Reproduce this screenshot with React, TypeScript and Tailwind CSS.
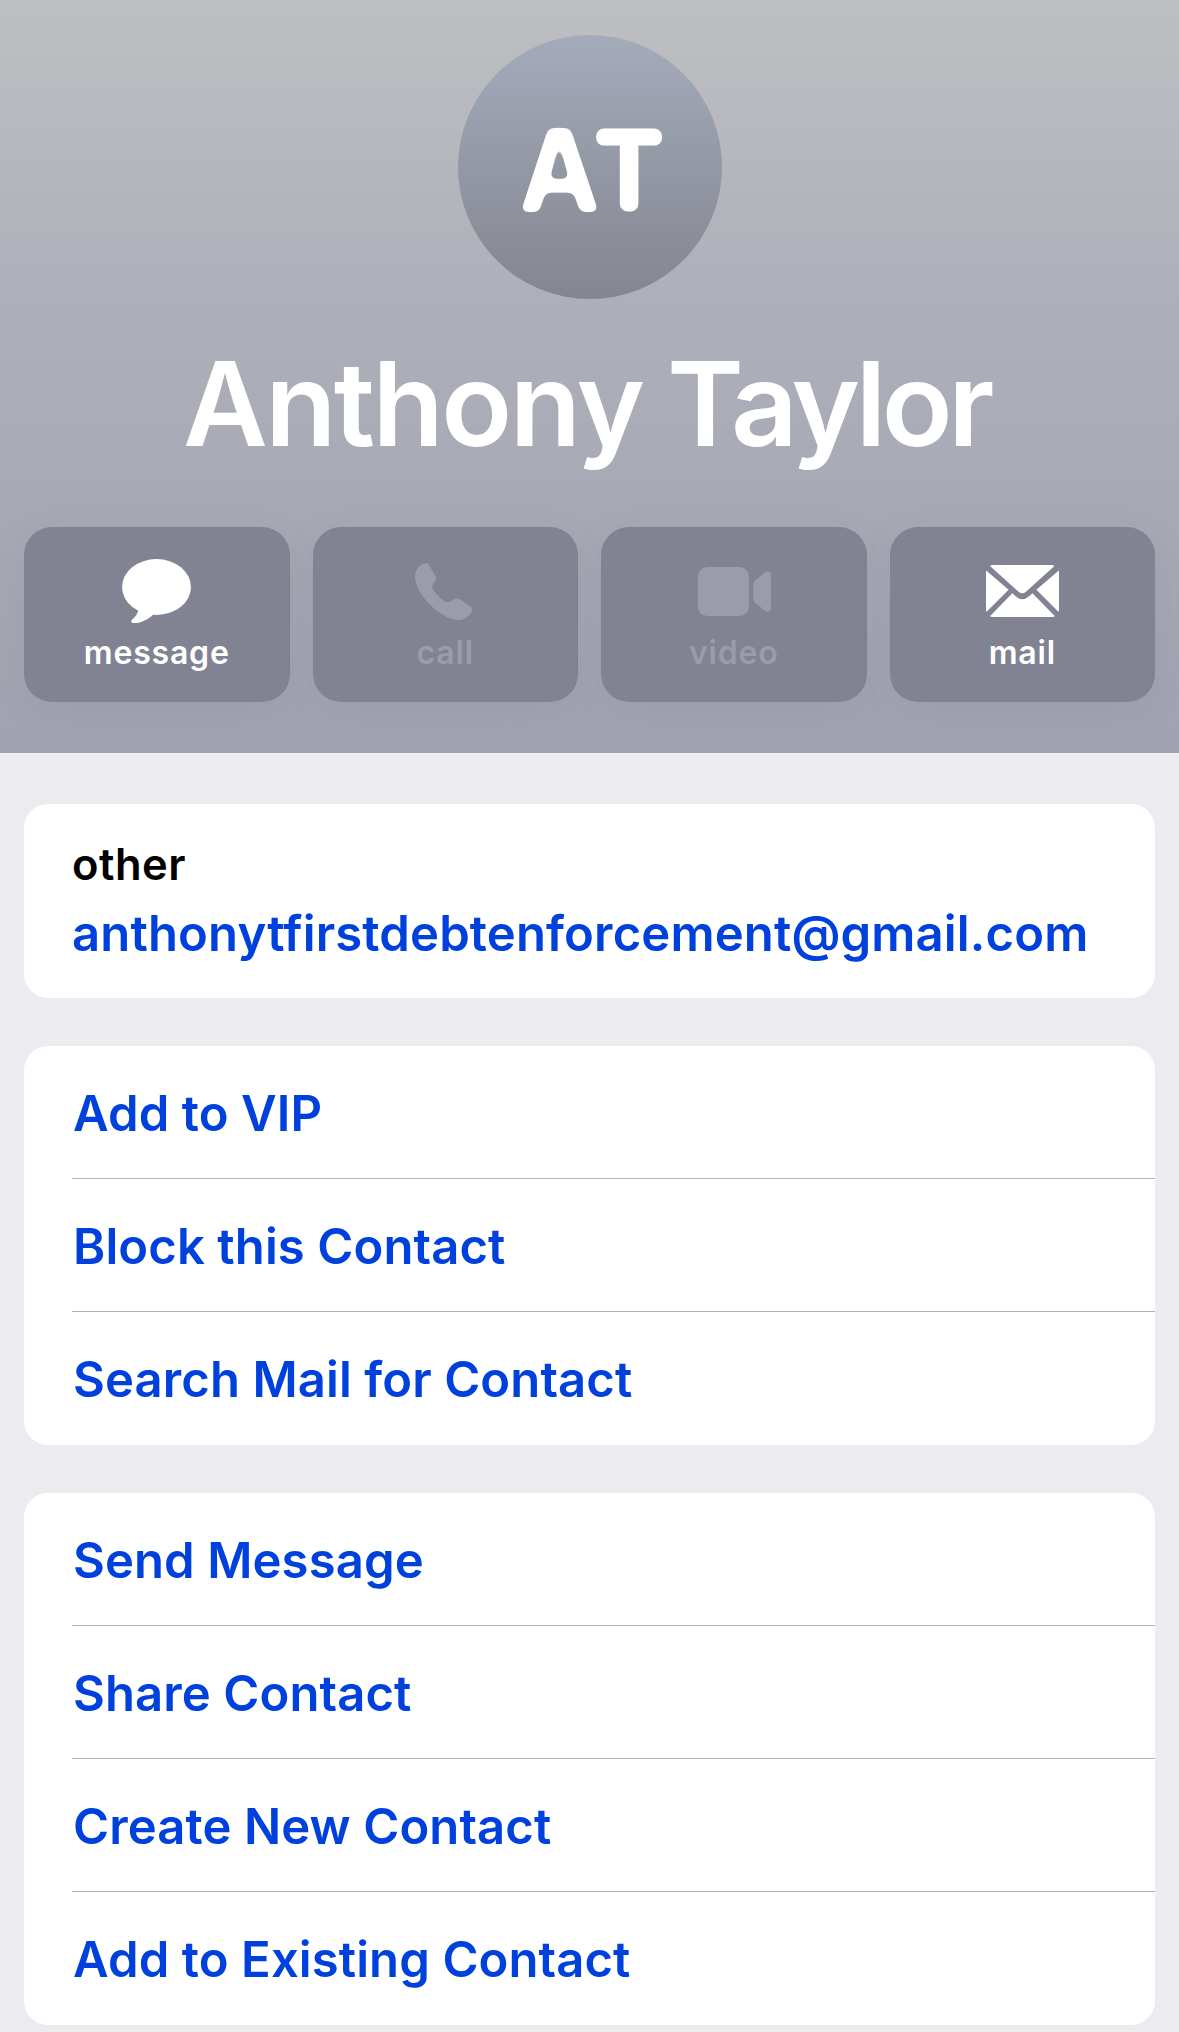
import type { ReactNode } from "react";

function MessageIcon() {
  return (
    <svg width="69" height="64.3" viewBox="0 0 207 193" fill="currentColor">
      <ellipse cx="103.5" cy="84" rx="103.5" ry="84" />
      <path d="M49 152C48 164 39 174 30 182C25 187 28 193 36 193C56 192 79 181 93 167L100 150Z" />
    </svg>
  );
}

function PhoneIcon() {
  return (
    <svg width="57" height="57" viewBox="0 0 171 171" fill="currentColor" className="mr-[3px]">
      <path d="M34 0C26 0 0 12 0 42C0 92 78 171 130 171C156 171 171 148 171 140C171 136 169 133 165 130L138 111C130 105 124 106 119 108L103 117C98 119 93 118 88 114C76 106 62 92 53 77C51 73 51 71 53 67L62 50C64 45 63 41 60 37L42 7C40 3 38 0 34 0Z" />
    </svg>
  );
}

function VideoIcon() {
  return (
    <svg width="73.3" height="49" viewBox="0 0 220 147" fill="currentColor" className="ml-[2px]">
      <rect width="153" height="147" rx="28" />
      <path d="M166 52C166 47 167 44 171 41L199 18C202 15 205 14 209 14C215 14 220 18 220 25V123C220 130 215 134 209 134C205 134 202 133 199 130L171 107C167 104 166 101 166 96Z" />
    </svg>
  );
}

function MailIcon() {
  return (
    <svg width="73" height="52" viewBox="0 0 73 52" fill="currentColor">
      <path d="M4 .9Q5 0 7 0H65.5Q67.5 0 68.4 .9L40 26.8Q36.3 29.9 32.6 26.8Z" />
      <path d="M.2 5.4L22.6 24.7L.6 46.8Q0 46 0 44.5V7Q0 6 .2 5.4Z" />
      <path d="M72.8 5.4L50.4 24.7L72.4 46.8Q73 46 73 44.5V7Q73 6 72.8 5.4Z" />
      <path d="M4 51.3L26.3 28.3L30 31.5Q36.4 37 42.8 31.5L46.4 28.3L69 51.3Q68 52 66 52H7Q5 52 4 51.3Z" />
    </svg>
  );
}

function Monogram() {
  return (
    <svg
      width="264"
      height="264"
      viewBox="0 0 264 264"
      fill="#fff"
      className="font-['Inter',sans-serif]"
      role="img"
      aria-label="AT"
    >
      <defs>
        <filter id="soften" x="-20%" y="-20%" width="140%" height="140%">
          <feGaussianBlur stdDeviation="3.8" />
          <feComponentTransfer>
            <feFuncA type="linear" slope="9" intercept="-3.9" />
          </feComponentTransfer>
        </filter>
      </defs>
      <text
        transform="translate(101.6 176.5) scale(0.96 1)"
        fontSize="115.5"
        fontWeight="700"
        textAnchor="middle"
        filter="url(#soften)"
      >
        A
      </text>
      <text
        transform="translate(171 169.2) scale(1.08 1)"
        fontSize="93.5"
        fontWeight="100"
        textAnchor="middle"
        stroke="#fff"
        strokeWidth="15"
        strokeLinejoin="round"
      >
        T
      </text>
    </svg>
  );
}

function ActionButton({ icon, label, disabled }: { icon: ReactNode; label: string; disabled?: boolean }) {
  return (
    <button
      disabled={disabled}
      className={
        "flex h-[175px] flex-col items-center rounded-[28px] bg-[#818393] pt-[31px] shadow-[0_6px_36px_rgba(90,94,110,0.09)] " +
        (disabled ? "text-[#9a9caa]" : "text-white")
      }
    >
      <span className="flex h-[66px] items-center justify-center">{icon}</span>
      <span className="mt-[9px] text-[32px] leading-[40px] font-semibold tracking-[0.8px]">{label}</span>
    </button>
  );
}

function ActionList({ items }: { items: string[] }) {
  return (
    <ul className="flex flex-col rounded-[24px] bg-white pl-[48px]">
      {items.map((item, i) => (
        <li
          key={item}
          className={
            "flex h-[133px] items-center border-[#b3b3b6] pt-[3px] pl-px text-[49px] leading-[60px] font-semibold tracking-[0.1px] text-[#0040dd] " +
            (i < items.length - 1 ? "border-b" : "")
          }
        >
          {item}
        </li>
      ))}
    </ul>
  );
}

export default function App() {
  return (
    <div className="min-h-[2032px] w-full bg-[#ebebf0] font-['Inter',sans-serif]">
      <header className="flex h-[753px] flex-col items-center overflow-hidden bg-linear-to-b from-[#bebfc2] via-[#adb0b9] via-40% to-[#a0a2af] px-6 pt-[35px]">
        <div className="h-[264px] w-[264px] rounded-full bg-linear-to-b from-[#a4abbb] to-[#84868f]">
          <Monogram />
        </div>
        <h1 className="mt-[35px] mr-[6px] text-[116.5px] leading-[140px] font-semibold tracking-[-2.6px] whitespace-nowrap text-white">
          Anthony <span className="-ml-[2px] tracking-[-4.5px]">Taylor</span>
        </h1>
        <div className="mt-[53px] grid w-full grid-cols-4 gap-[23px]">
          <ActionButton icon={<MessageIcon />} label="message" />
          <ActionButton icon={<PhoneIcon />} label="call" disabled />
          <ActionButton icon={<VideoIcon />} label="video" disabled />
          <ActionButton icon={<MailIcon />} label="mail" />
        </div>
      </header>

      <main className="flex flex-col gap-12 px-6 pt-[51px]">
        <section className="flex h-[194px] flex-col rounded-[24px] bg-white pt-[32px] pl-[48px]">
          <span className="text-[43.5px] leading-[56px] font-semibold tracking-[0.5px] text-black">other</span>
          <a className="mt-[12px] text-[49px] leading-[60px] font-semibold tracking-[0.15px] whitespace-nowrap text-[#0040dd]">
            anthonytfirstdebtenforcement@gmail.com
          </a>
        </section>
        <ActionList items={["Add to VIP", "Block this Contact", "Search Mail for Contact"]} />
        <ActionList items={["Send Message", "Share Contact", "Create New Contact", "Add to Existing Contact"]} />
      </main>
    </div>
  );
}
